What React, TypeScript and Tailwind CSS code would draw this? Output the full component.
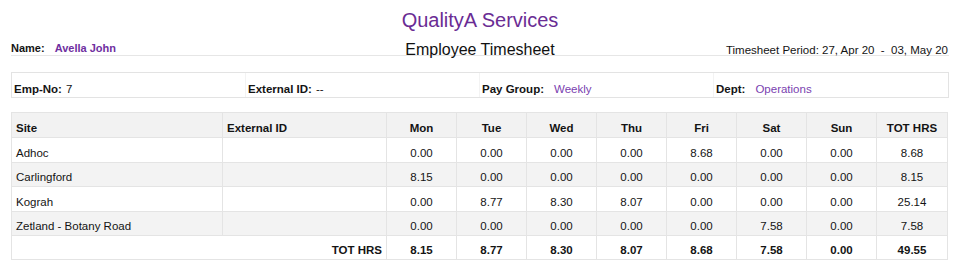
import React from 'react';

const days = ['Mon', 'Tue', 'Wed', 'Thu', 'Fri', 'Sat', 'Sun'];

const rows = [
  { site: 'Adhoc', hrs: ['0.00', '0.00', '0.00', '0.00', '8.68', '0.00', '0.00'], total: '8.68' },
  { site: 'Carlingford', hrs: ['8.15', '0.00', '0.00', '0.00', '0.00', '0.00', '0.00'], total: '8.15' },
  { site: 'Kograh', hrs: ['0.00', '8.77', '8.30', '8.07', '0.00', '0.00', '0.00'], total: '25.14' },
  { site: 'Zetland - Botany Road', hrs: ['0.00', '0.00', '0.00', '0.00', '0.00', '7.58', '0.00'], total: '7.58' },
];

const totals = ['8.15', '8.77', '8.30', '8.07', '8.68', '7.58', '0.00'];

function InfoCell({ label, value, purple, last }: { label: string; value: string; purple?: boolean; last?: boolean }) {
  return (
    <div className={`flex items-end px-[2px] pb-[1px] ${last ? '' : 'border-r border-[#f3f3f3]'}`}>
      <span className="font-bold">{label}</span>
      {purple ? (
        <span className="ml-[10px] text-[#7a3fb0]">{value}</span>
      ) : (
        <span className="ml-[4px]">{value}</span>
      )}
    </div>
  );
}

export default function App() {
  return (
    <div className="w-[960px] h-[268px] bg-white px-[11px] text-[#141414] font-['Liberation_Sans',Arial,sans-serif] text-[11.5px] leading-[13px]">
      {/* Header */}
      <h1 className="pt-[9px] text-center text-[20px] leading-[23px] text-[#6a2c94]">QualityA Services</h1>

      <div className="grid grid-cols-3 items-end h-[24px] border-b border-[#e6e6e6]">
        <div className="flex items-end text-[11px] font-bold">
          <span>Name:</span>
          <span className="ml-[10px] text-[#6f2f9f]">Avella John</span>
        </div>
        <div className="-mb-[4px] text-center text-[16px] leading-[18px] text-[#111]">Employee Timesheet</div>
        <div className="-mb-[2px] text-right whitespace-pre pr-[1px]">Timesheet Period: 27, Apr 20  -  03, May 20</div>
      </div>

      {/* Employee info */}
      <div className="mt-[16px] grid grid-cols-4 h-[26px] border border-[#e3e3e3]">
        <InfoCell label="Emp-No:" value="7" />
        <InfoCell label="External ID:" value="--" />
        <InfoCell label="Pay Group:" value="Weekly" purple />
        <InfoCell label="Dept:" value="Operations" purple last />
      </div>

      {/* Hours table */}
      <table className="mt-[14px] w-[936px] table-fixed border-collapse">
        <colgroup>
          <col className="w-[211px]" />
          <col className="w-[164px]" />
          {days.map((d) => (
            <col key={d} className="w-[70px]" />
          ))}
          <col className="w-[71px]" />
        </colgroup>
        <thead>
          <tr className="h-[25px] bg-[#f2f2f2]">
            <th className="border border-[#e4e4e4] px-[4px] pb-[2px] text-left align-bottom font-bold">Site</th>
            <th className="border border-[#e4e4e4] px-[4px] pb-[2px] text-left align-bottom font-bold">External ID</th>
            {days.map((d) => (
              <th key={d} className="border border-[#e4e4e4] pb-[2px] text-center align-bottom font-bold">
                {d}
              </th>
            ))}
            <th className="border border-[#e4e4e4] pb-[2px] text-center align-bottom font-bold">TOT HRS</th>
          </tr>
        </thead>
        <tbody>
          {rows.map((r, i) => (
            <tr key={r.site} className={`h-[24.5px] ${i % 2 === 1 ? 'bg-[#f3f3f3]' : 'bg-white'}`}>
              <td className="border border-[#e4e4e4] px-[4px] pb-[2px] align-bottom">{r.site}</td>
              <td className="border border-[#e4e4e4] px-[4px] pb-[2px] align-bottom"></td>
              {r.hrs.map((h, j) => (
                <td key={j} className="border border-[#e4e4e4] pb-[2px] text-center align-bottom">
                  {h}
                </td>
              ))}
              <td className="border border-[#e4e4e4] pb-[2px] text-center align-bottom">{r.total}</td>
            </tr>
          ))}
          <tr className="h-[24px] bg-white font-bold">
            <td colSpan={2} className="border border-[#e4e4e4] pr-[4px] pb-[2px] text-right align-bottom">
              TOT HRS
            </td>
            {totals.map((t, j) => (
              <td key={j} className="border border-[#e4e4e4] pb-[2px] text-center align-bottom">
                {t}
              </td>
            ))}
            <td className="border border-[#e4e4e4] pb-[2px] text-center align-bottom">49.55</td>
          </tr>
        </tbody>
      </table>
    </div>
  );
}
